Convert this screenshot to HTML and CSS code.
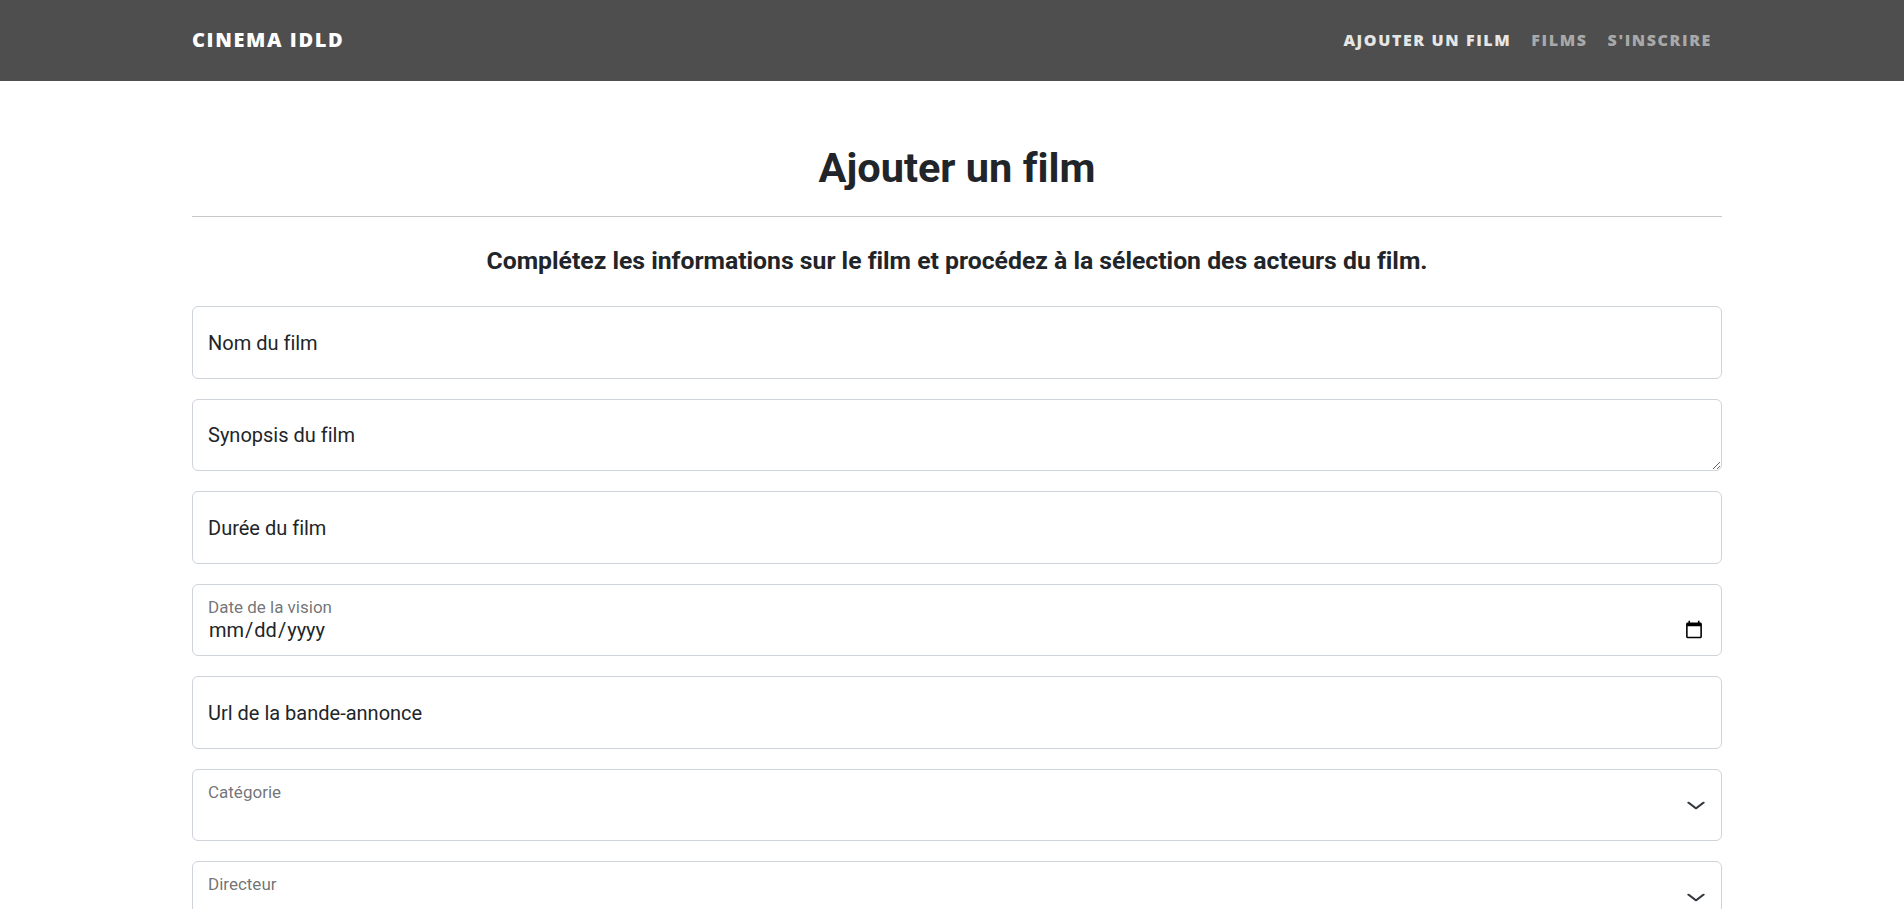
FILE: index.html
```html
<!DOCTYPE html>
<html lang="fr">
<head>
<meta charset="utf-8">
<title>Cinema IDLD - Ajouter un film</title>
<link rel="stylesheet" href="styles.css">
</head>
<body>
<nav class="navbar">
  <div class="nav-inner">
    <a class="brand" href="#">CINEMA IDLD</a>
    <ul class="nav-links">
      <li><a class="nav-link active" href="#">AJOUTER UN FILM</a></li>
      <li><a class="nav-link" href="#">FILMS</a></li>
      <li><a class="nav-link" href="#">S'INSCRIRE</a></li>
    </ul>
  </div>
</nav>
<main class="page">
  <h2 class="page-title">Ajouter un film</h2>
  <hr class="divider">
  <h5 class="page-subtitle">Complétez les informations sur le film et procédez à la sélection des acteurs du film.</h5>
  <form class="film-form">
    <div class="field">
      <input class="control" type="text" placeholder="Nom du film">
    </div>
    <div class="field">
      <textarea class="control control-area" placeholder="Synopsis du film"></textarea>
    </div>
    <div class="field">
      <input class="control" type="text" placeholder="Durée du film">
    </div>
    <div class="field">
      <input class="control control-floated" id="date" type="date">
      <label class="float-label" for="date">Date de la vision</label>
    </div>
    <div class="field">
      <input class="control" type="text" placeholder="Url de la bande-annonce">
    </div>
    <div class="field">
      <select class="control control-floated control-select" id="cat">
        <option value=""></option>
      </select>
      <label class="float-label" for="cat">Catégorie</label>
      <svg class="chevron" viewBox="0 0 16 16" width="20" height="15" preserveAspectRatio="none"><path d="m2 5 6 6 6-6" fill="none" stroke="#343a40" stroke-width="2" stroke-linecap="round" stroke-linejoin="round"/></svg>
    </div>
    <div class="field">
      <select class="control control-floated control-select" id="dir">
        <option value=""></option>
      </select>
      <label class="float-label" for="dir">Directeur</label>
      <svg class="chevron" viewBox="0 0 16 16" width="20" height="15" preserveAspectRatio="none"><path d="m2 5 6 6 6-6" fill="none" stroke="#343a40" stroke-width="2" stroke-linecap="round" stroke-linejoin="round"/></svg>
    </div>
  </form>
</main>
</body>
</html>
```
FILE: styles.css
```css
* { box-sizing: border-box; }

body {
  margin: 0;
  background: #fff;
  color: #212529;
  font-family: Roboto, "Noto Sans", "Liberation Sans", sans-serif;
  font-size: 20px;
  line-height: 1.5;
  font-variant-ligatures: none;
}

.navbar {
  background: #4e4e4e;
  height: 81px;
  display: flex;
  align-items: center;
  padding: 0 182px 2px 192px;
}

.nav-inner {
  flex: 1;
  display: flex;
  justify-content: space-between;
  align-items: center;
}

.brand {
  font-family: "Open Sans", sans-serif;
  font-weight: 800;
  font-size: 20px;
  letter-spacing: 0.08em;
  color: #fff;
  text-decoration: none;
}

.nav-links {
  display: flex;
  list-style: none;
  margin: 0;
  padding: 0;
}

.nav-link {
  display: block;
  padding: 0 10px;
  font-family: "Open Sans", sans-serif;
  font-weight: 800;
  font-size: 16px;
  letter-spacing: 0.1em;
  color: #a9a9a9;
  text-decoration: none;
}

.nav-link.active { color: #e6e6e6; }

.page {
  padding: 62px 182px 40px 192px;
}

.page-title {
  margin: 0;
  font-size: 41.5px;
  font-weight: 700;
  line-height: 1.2;
  text-align: center;
}

.divider {
  margin: 23px 0 29px;
  border: 0;
  border-top: 1px solid #c8c9ca;
}

.page-subtitle {
  margin: 0 0 31px;
  font-size: 24.75px;
  font-weight: 700;
  line-height: 1.2;
  text-align: center;
}

.field {
  position: relative;
  margin-bottom: 20px;
}

.control {
  display: block;
  width: 100%;
  height: 72.5px;
  margin: 0;
  padding: 0 15px;
  border: 1px solid #ced4da;
  border-radius: 6px;
  background: #fff;
  color: #212529;
  font-family: inherit;
  font-size: 20px;
  line-height: 1.5;
  font-variant-ligatures: none;
  outline: none;
}

.control::placeholder { color: #212529; opacity: 1; }

.control-area {
  padding: 20px 15px;
  min-height: 72.5px;
  resize: vertical;
  overflow: hidden;
}

.control-floated {
  padding: 32px 15px 12px;
}

.control-select {
  appearance: none;
  -webkit-appearance: none;
}

.float-label {
  position: absolute;
  top: 11px;
  left: 16px;
  font-size: 17px;
  line-height: 1.5;
  color: rgba(33, 37, 41, 0.65);
  pointer-events: none;
}

.chevron {
  position: absolute;
  right: 16px;
  top: 29px;
}
```
